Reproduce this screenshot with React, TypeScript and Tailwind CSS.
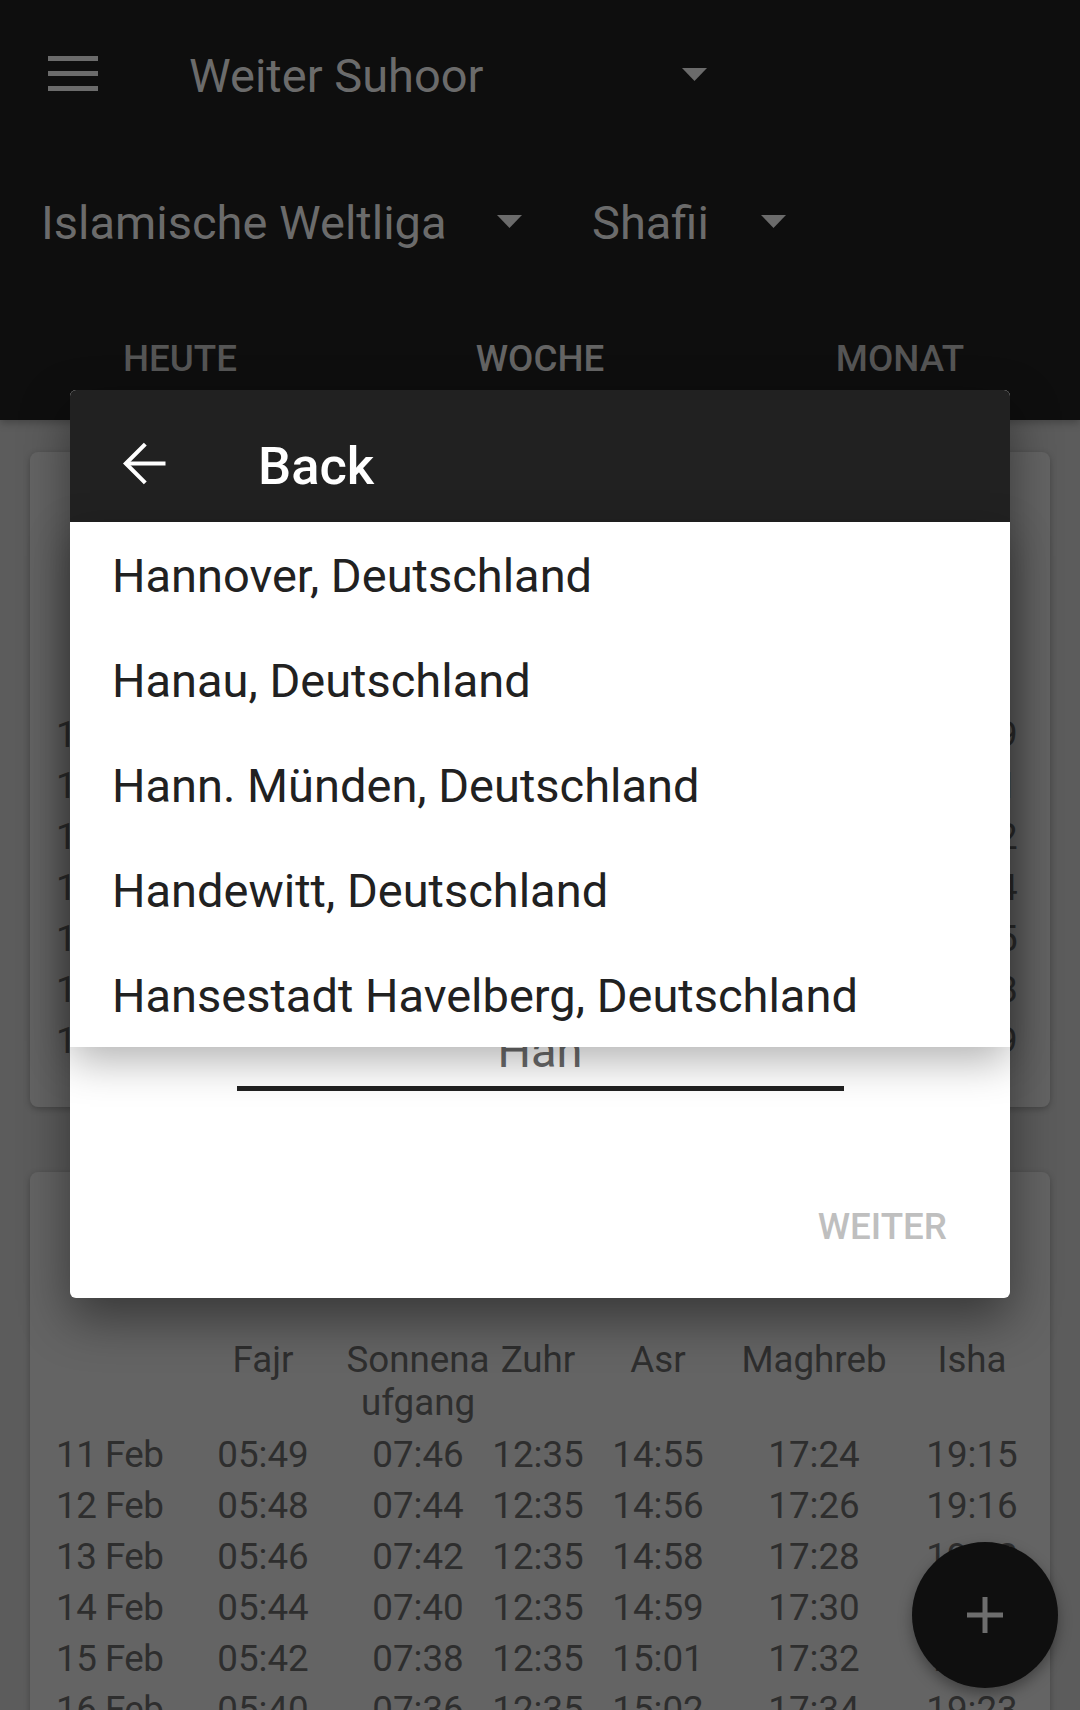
import React from "react";

const cols = [
  "w-[120px] justify-start",
  "w-[174px] justify-center",
  "w-[136px] justify-center",
  "w-[104px] justify-center",
  "w-[136px] justify-center",
  "w-[176px] justify-center",
  "w-[140px] justify-center",
];

const card1 = [
  ["11 Feb", "05:43", "07:39", "12:29", "14:49", "17:18", "19:09"],
  ["12 Feb", "05:42", "07:37", "12:29", "14:51", "17:20", "19:11"],
  ["13 Feb", "05:40", "07:35", "12:29", "14:52", "17:21", "19:12"],
  ["14 Feb", "05:38", "07:33", "12:29", "14:54", "17:23", "19:14"],
  ["15 Feb", "05:37", "07:31", "12:29", "14:55", "17:25", "19:15"],
  ["16 Feb", "05:35", "07:29", "12:29", "14:57", "17:27", "19:18"],
  ["17 Feb", "05:33", "07:27", "12:29", "14:58", "17:29", "19:19"],
];

const card2 = [
  ["11 Feb", "05:49", "07:46", "12:35", "14:55", "17:24", "19:15"],
  ["12 Feb", "05:48", "07:44", "12:35", "14:56", "17:26", "19:16"],
  ["13 Feb", "05:46", "07:42", "12:35", "14:58", "17:28", "19:18"],
  ["14 Feb", "05:44", "07:40", "12:35", "14:59", "17:30", "19:20"],
  ["15 Feb", "05:42", "07:38", "12:35", "15:01", "17:32", "19:21"],
  ["16 Feb", "05:40", "07:36", "12:35", "15:02", "17:34", "19:23"],
  ["17 Feb", "05:38", "07:34", "12:35", "15:04", "17:36", "19:25"],
];

const headers = ["", "Fajr", "Sonnenaufgang", "Zuhr", "Asr", "Maghreb", "Isha"];

const places = [
  "Hannover, Deutschland",
  "Hanau, Deutschland",
  "Hann. Münden, Deutschland",
  "Handewitt, Deutschland",
  "Hansestadt Havelberg, Deutschland",
];

function Triangle() {
  return (
    <svg width="25" height="13" viewBox="0 0 25 13" className="mt-[20px] shrink-0">
      <polygon points="0,0 25,0 12.5,13" fill="#6b6b6b" />
    </svg>
  );
}

function WeekCard({ rows }: { rows: string[][] }) {
  return (
    <div className="bg-[#646464] rounded-[8px] shadow-[0_2px_6px_rgba(0,0,0,0.25)] pl-[26px] pb-[41px] text-[#2e2e2e] text-[36.75px]">
      <div className="h-[166px]" />
      <div className="flex items-start leading-[43px] mb-[5px]">
        {headers.map((h, i) => (
          <div key={i} className={`flex shrink-0 ${cols[i]}`}>
            {i === 2 ? (
              <span className="w-[150px] shrink-0 break-all text-center">{h}</span>
            ) : (
              <span className="whitespace-nowrap">{h}</span>
            )}
          </div>
        ))}
      </div>
      {rows.map((r, ri) => (
        <div key={ri} className="flex leading-[51px]">
          {r.map((c, ci) => (
            <div key={ci} className={`flex shrink-0 ${cols[ci]}`}>
              <span className={ci === 0 ? "whitespace-nowrap tracking-[-0.5px]" : "whitespace-nowrap"}>{c}</span>
            </div>
          ))}
        </div>
      ))}
    </div>
  );
}

export default function App() {
  return (
    <div className="relative w-[1080px] h-[1710px] overflow-hidden bg-[#5c5c5c] font-['Roboto',sans-serif]">
      {/* App bar */}
      <div className="relative z-[1] bg-[#0e0e0e] text-[#6b6b6b] shadow-[0_3px_8px_rgba(0,0,0,0.25)]">
        <div className="flex items-start h-[147px] pt-[48px] pl-[48px]">
          <svg width="50" height="35" viewBox="0 0 50 35" className="mt-[8px] shrink-0">
            <rect x="0" y="0" width="50" height="5" fill="#6b6b6b" />
            <rect x="0" y="15" width="50" height="5" fill="#6b6b6b" />
            <rect x="0" y="30" width="50" height="5" fill="#6b6b6b" />
          </svg>
          <div className="ml-[91px] w-[518px] flex items-start justify-between">
            <span className="text-[47px] leading-[56px] whitespace-nowrap">Weiter Suhoor</span>
            <Triangle />
          </div>
        </div>
        <div className="flex items-start h-[147px] pt-[48px] pl-[41px]">
          <div className="w-[481px] flex items-start justify-between">
            <span className="text-[47px] leading-[56px] whitespace-nowrap">Islamische Weltliga</span>
            <Triangle />
          </div>
          <div className="ml-[70px] w-[194px] flex items-start justify-between">
            <span className="text-[47px] leading-[56px] whitespace-nowrap">Shafii</span>
            <Triangle />
          </div>
        </div>
        <div className="flex h-[126px] pt-[43px] text-[36.75px] font-medium leading-[44px]">
          <div className="flex-1 text-center text-[#555555]">HEUTE</div>
          <div className="flex-1 text-center text-[#646464]">WOCHE</div>
          <div className="flex-1 text-center text-[#555555]">MONAT</div>
        </div>
      </div>

      {/* Cards */}
      <div className="flex flex-col gap-[65px] px-[30px] pt-[32px]">
        <WeekCard rows={card1} />
        <WeekCard rows={card2} />
      </div>

      {/* FAB */}
      <div className="absolute right-[22px] bottom-[22px] w-[146px] h-[146px] rounded-full bg-[#0f0f0f] shadow-[0_6px_14px_rgba(0,0,0,0.35)] flex items-center justify-center">
        <svg width="36" height="36" viewBox="0 0 36 36">
          <rect x="15.5" y="0" width="5" height="36" fill="#6e6e6e" />
          <rect x="0" y="15.5" width="36" height="5" fill="#6e6e6e" />
        </svg>
      </div>

      {/* Dialog */}
      <div className="absolute left-[70px] top-[390px] w-[940px] h-[908px] z-[5] bg-white rounded-[6px] shadow-[0_20px_50px_rgba(0,0,0,0.45)] flex flex-col">
        <div className="h-[132px] shrink-0 bg-[#212121] rounded-t-[6px] flex items-start pt-[42px] pl-[43px] text-white">
          <svg width="63" height="63" viewBox="0 0 24 24" className="shrink-0">
            <path d="M20 12H5.2" stroke="#ffffff" strokeWidth="1.55" fill="none" />
            <path d="M12.3 4.6 4.9 12l7.4 7.4" stroke="#ffffff" strokeWidth="1.55" fill="none" />
          </svg>
          <span className="ml-[82px] mt-[3px] text-[52.5px] font-medium leading-[62px]">Back</span>
        </div>
        <div className="flex-1 flex flex-col items-center pt-[501px]">
          <span className="text-[47px] leading-[56px] text-[#6a6a6a]">Han</span>
          <div className="w-[607px] h-[5px] mt-[7px] bg-[#212121]" />
          <span className="self-end mr-[63px] mt-[114px] text-[36.75px] font-medium leading-[44px] text-[#bfbfbf]">
            WEITER
          </span>
        </div>

        {/* Suggestions popup */}
        <div className="absolute left-0 right-0 top-[132px] h-[525px] bg-white shadow-[0_14px_40px_rgba(0,0,0,0.3)]">
          {places.map((p) => (
            <div key={p} className="h-[105px] pt-[26px] pl-[42px] text-[47px] leading-[56px] text-[#212121] whitespace-nowrap">
              {p}
            </div>
          ))}
        </div>
      </div>
    </div>
  );
}
